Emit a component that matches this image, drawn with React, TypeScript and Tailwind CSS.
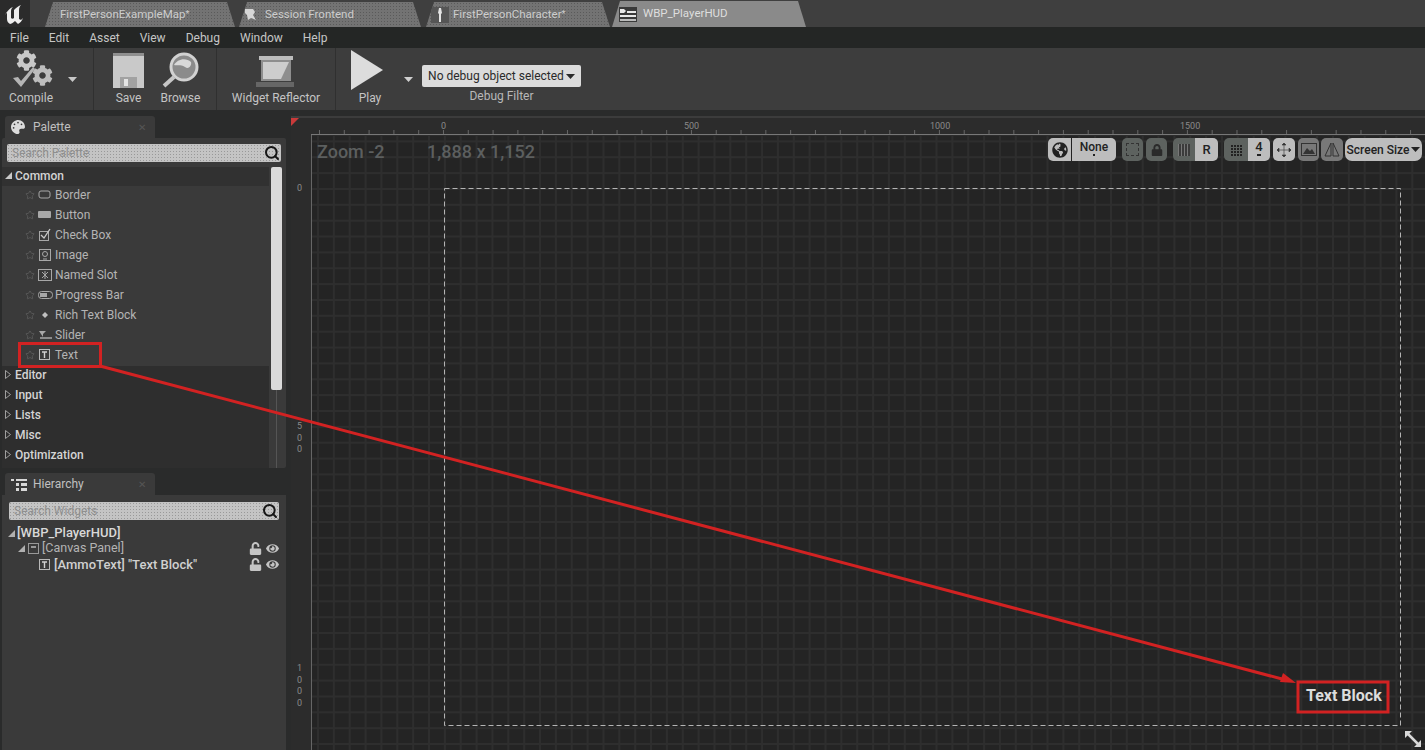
import { Search, Star } from "lucide-react";
import { FaCog, FaEye, FaGlobeAmericas, FaLock, FaPalette, FaUnlock } from "react-icons/fa";

const FONT = "font-['Roboto','Liberation_Sans',sans-serif]";

const menus = ["File", "Edit", "Asset", "View", "Debug", "Window", "Help"];

const Caret = ({ className = "" }: { className?: string }) => (
  <svg width="9" height="5" viewBox="0 0 9 5" className={className}>
    <path d="M0 0h9L4.5 5z" fill="currentColor" />
  </svg>
);

const Logo = () => (
  <svg width="22" height="20" viewBox="0 0 22 20">
    <path
      d="M1 11C3 7 6 4 9 3 7 5 7 6 7 8v6c1 1 2 1 3 0V6c2-2 4-4 7-5-2 2-2 4-2 6v8l2 1 2-2c-1 3-3 5-5 6l-3-3c-2 2-4 3-5 3-2-1-3-3-3-5V9c-1 0-1 1-2 2z"
      fill="#eeeeee"
    />
  </svg>
);

const TabIcon = ({ kind }: { kind: string }) => {
  if (kind === "session")
    return (
      <svg width="16" height="14" viewBox="0 0 16 14" className="mr-[5px]">
        <path d="M1 1h8l2 3-2 3 3 5-5-2-3 2-1-5-2-2z" fill="#d6d6d6" />
      </svg>
    );
  if (kind === "char")
    return (
      <svg width="18" height="18" viewBox="0 0 18 18" className="mr-[4px]">
        <rect x="0" y="1" width="18" height="16" fill="#555" />
        <path d="M8 2h2l1 5-1 1v8H8V8L7 7z" fill="#e4e4e4" />
      </svg>
    );
  return (
    <svg width="18" height="15" viewBox="0 0 18 15" className="mr-[6px]">
      <rect width="18" height="15" fill="#3a3a3a" />
      <path d="M1 2h4l2 2-2 2H1z" fill="#e8e8e8" />
      <rect x="1" y="8" width="16" height="2" fill="#e8e8e8" />
      <rect x="8" y="4" width="9" height="2" fill="#e8e8e8" />
      <rect x="1" y="12" width="16" height="2" fill="#bbb" />
    </svg>
  );
};

const tabs = [
  { label: "FirstPersonExampleMap", mark: "*", left: "ml-[15px]", w: "w-[190px]", pl: "pl-[15px]", kind: "" },
  { label: "Session Frontend", mark: "", left: "ml-[4px]", w: "w-[182px]", pl: "pl-[5px]", kind: "session" },
  { label: "FirstPersonCharacter", mark: "*", left: "ml-[5px]", w: "w-[184px]", pl: "pl-[5px]", kind: "char" },
];

const TopTabs = () => (
  <div className="h-[27px] flex items-end bg-[#3f3f3f] shrink-0">
    <div className="w-[30px] h-full bg-[#2b2b2b] flex items-center justify-center shrink-0">
      <Logo />
    </div>
    {tabs.map((t) => (
      <div
        key={t.label}
        className={`${t.left} ${t.w} ${t.pl} h-[25px] flex items-center bg-[#737373] bg-[radial-gradient(rgba(0,0,0,0.22)_1px,transparent_1px)] bg-[size:3px_3px] rounded-t-[6px] [clip-path:polygon(8px_0,calc(100%-8px)_0,100%_100%,0_100%)] text-[11.5px] text-[#cdcdcd]`}
      >
        {t.kind && <TabIcon kind={t.kind} />}
        <span>{t.label}</span>
        <span className="text-[9px]">{t.mark}</span>
      </div>
    ))}
    <div className="ml-[2px] w-[194px] pl-[7px] h-[26px] flex items-center bg-[#8a8a8a] rounded-t-[6px] [clip-path:polygon(8px_0,calc(100%-8px)_0,100%_100%,0_100%)] text-[11.5px] text-[#dedede]">
      <TabIcon kind="wbp" />
      <span>WBP_PlayerHUD</span>
    </div>
  </div>
);

const MenuBar = () => (
  <div className="h-[21px] bg-[#242625] flex items-center gap-5 pl-[10px] text-[12px] text-[#c6c6c6] shrink-0">
    {menus.map((m) => (
      <span key={m}>{m}</span>
    ))}
  </div>
);

const ToolLabel = ({ children }: { children: string }) => (
  <span className="absolute top-[43px] text-[12px] leading-[14px] text-[#c4c4c4] whitespace-nowrap">{children}</span>
);

const Sep = () => <div className="w-px h-full bg-[#303030] shrink-0" />;

const Toolbar = () => (
  <div className="h-[62px] bg-[#3d3d3d] flex text-[#c4c4c4] shrink-0">
    <div className="w-[93px] relative flex flex-col items-center pr-[31px] pt-[2px]">
      <div className="relative w-[42px] h-[40px]">
        <FaCog className="absolute left-[6px] top-[0px] text-[#c9c9c9]" size={21} />
        <FaCog className="absolute left-[22px] top-[15px] text-[#bdbdbd]" size={21} />
        <svg width="30" height="24" viewBox="0 0 30 24" className="absolute left-[1px] top-[14px]">
          <path d="M2 14l5-1 3 4L22 3l2 2L10 23z" fill="#b5b5b5" />
        </svg>
      </div>
      <ToolLabel>Compile</ToolLabel>
      <Caret className="absolute left-[68px] top-[29px] text-[#c8c8c8]" />
    </div>
    <Sep />
    <div className="w-[122px] flex justify-center gap-[16px] pt-[4px] pl-[3px]">
      <div className="relative flex flex-col items-center w-[32px]">
        <svg width="33" height="37" viewBox="0 0 33 37">
          <path d="M1 1h31v35H1z" fill="#c9c9c9" />
          <rect x="1" y="1" width="31" height="3" fill="#8f8f8f" />
          <rect x="8" y="25" width="17" height="11" fill="#a2a2a2" />
          <rect x="12" y="27" width="4" height="7" fill="#e4e4e4" />
        </svg>
        <span className="mt-[2px] text-[12px] leading-[14px] text-[#c4c4c4]">Save</span>
      </div>
      <div className="relative flex flex-col items-center w-[40px]">
        <svg width="40" height="37" viewBox="0 0 40 37">
          <circle cx="23" cy="15" r="13" fill="#8b8b8b" stroke="#d2d2d2" strokeWidth="3" />
          <path d="M13 13c3-6 12-8 17-3 1 3-2 8-6 5-5-3-8-1-11-2z" fill="#d8d8d8" />
          <path d="M13 25L3 34" stroke="#c6c6c6" strokeWidth="4" />
        </svg>
        <span className="mt-[2px] text-[12px] leading-[14px] text-[#c4c4c4]">Browse</span>
      </div>
    </div>
    <Sep />
    <div className="w-[118px] relative flex flex-col items-center pt-[6px]">
      <svg width="40" height="35" viewBox="0 0 40 35">
        <path d="M3 2h34v4H3z" fill="#bdbdbd" />
        <path d="M5 6h30v21H5z" fill="#8e8e8e" />
        <path d="M7 8h26l-8 17H7z" fill="#cdcdcd" />
        <path d="M0 28h38v5H0z" fill="#666" />
      </svg>
      <ToolLabel>Widget Reflector</ToolLabel>
    </div>
    <Sep />
    <div className="w-[86px] relative flex flex-col items-center pr-[18px] pt-[2px]">
      <svg width="34" height="40" viewBox="0 0 34 40" className="-ml-[6px]">
        <path d="M1 0l32 20L1 40z" fill="#dcdcdc" />
      </svg>
      <ToolLabel>Play</ToolLabel>
      <Caret className="absolute left-[68px] top-[29px] text-[#d0d0d0]" />
    </div>
    <div className="flex flex-col items-center pt-[17px]">
      <div className="w-[159px] h-[22px] rounded-[2px] bg-[#dcdcdc] text-[#2a2a2a] text-[12px] flex items-center justify-center gap-[2px]">
        <span>No debug object selected</span>
        <Caret />
      </div>
      <span className="mt-[2px] text-[12px] leading-[14px] text-[#b8b8b8]">Debug Filter</span>
    </div>
  </div>
);

const PanelTab = ({ icon, label }: { icon: React.ReactNode; label: string }) => (
  <div className="ml-[5px] w-[150px] h-[22px] bg-[#3a3a3a] rounded-t-[3px] flex items-center pl-[6px] shrink-0">
    <span className="w-[22px] flex">{icon}</span>
    <span className="text-[12px] text-[#c0c0c0]">{label}</span>
    <span className="ml-auto mr-[9px] text-[10px] text-[#555]">✕</span>
  </div>
);

const SearchBox = ({ placeholder, className }: { placeholder: string; className: string }) => (
  <div className={`${className} h-[18px] rounded-[2px] bg-[#c4c4c4] bg-[radial-gradient(rgba(0,0,0,0.22)_1px,transparent_1px)] bg-[size:3px_3px] flex items-center pl-[5px] pr-[1px] text-[12px] text-[#8f8f8f]`}>
    <span>{placeholder}</span>
    <Search size={16} strokeWidth={3} className="ml-auto text-[#161616]" />
  </div>
);

const widgetIcons: Record<string, React.ReactNode> = {
  Border: <rect x="1" y="3" width="11" height="7" rx="2" fill="none" stroke="#a8a8a8" />,
  Button: <rect x="0" y="3" width="13" height="7" rx="1" fill="#a8a8a8" />,
  "Check Box": (
    <>
      <rect x="1.5" y="3.5" width="9" height="9" fill="none" stroke="#a8a8a8" />
      <path d="M3 7l3 3 6-9" fill="none" stroke="#c8c8c8" strokeWidth="1.3" />
    </>
  ),
  Image: (
    <>
      <rect x="1.5" y="1.5" width="11" height="11" fill="none" stroke="#a8a8a8" />
      <circle cx="7" cy="6" r="2.5" fill="none" stroke="#a8a8a8" />
      <path d="M5 11h4" stroke="#a8a8a8" />
    </>
  ),
  "Named Slot": (
    <>
      <rect x="0.5" y="1.5" width="13" height="11" fill="none" stroke="#a8a8a8" />
      <path d="M4 4l6 6M10 4l-6 6M7 3v8" stroke="#a8a8a8" />
    </>
  ),
  "Progress Bar": (
    <>
      <rect x="0.5" y="3.5" width="14" height="7" rx="3" fill="none" stroke="#a8a8a8" />
      <rect x="2" y="5" width="7" height="4" fill="#a8a8a8" />
    </>
  ),
  "Rich Text Block": <path d="M7 4l3 3-3 3-3-3z" fill="#c0c0c0" />,
  Slider: (
    <>
      <path d="M1 3h7L5 6v3" fill="#a8a8a8" />
      <path d="M2 10h12" stroke="#a8a8a8" strokeWidth="1.5" />
    </>
  ),
  Text: (
    <>
      <rect x="1.5" y="1.5" width="10" height="10" fill="none" stroke="#b8b8b8" />
      <path d="M4 4h5M6.5 4v6" stroke="#d0d0d0" strokeWidth="1.4" />
    </>
  ),
};

const widgets = ["Border", "Button", "Check Box", "Image", "Named Slot", "Progress Bar", "Rich Text Block", "Slider", "Text"];
const collapsed = ["Editor", "Input", "Lists", "Misc", "Optimization"];

const WidgetIcon = ({ name, className = "" }: { name: string; className?: string }) => (
  <svg width="15" height="14" viewBox="0 0 15 14" className={className}>
    {widgetIcons[name]}
  </svg>
);

const Palette = () => (
  <div className="h-[330px] bg-[#3a3a3a] ml-[2px] w-[284px] rounded-[2px] pt-[6px] flex flex-col shrink-0">
    <SearchBox placeholder="Search Palette" className="mx-[5px] w-[274px]" />
    <div className="mt-[5px] flex flex-1 min-h-0">
      <div className="w-[267px] flex flex-col">
        <div className="h-[19px] pb-[2px] bg-[#313131] flex items-center pl-[3px] text-[12px] font-medium text-[#d4d4d4] shrink-0">
          <svg width="7" height="7" viewBox="0 0 7 7" className="mr-[1px]">
            <path d="M7 0v7H0z" fill="#c8c8c8" />
          </svg>
          <span className="ml-[2px]">Common</span>
        </div>
        {widgets.map((w) => (
          <div key={w} className="h-[20px] -translate-y-[1px] flex items-center pl-[23px] text-[12px] text-[#b4b4b4] shrink-0">
            <Star size={10} strokeWidth={1.5} className="text-[#666] mr-[3px]" />
            <WidgetIcon name={w} className="mr-[2px]" />
            <span>{w}</span>
          </div>
        ))}
        <div className="flex-1 bg-[#2e2e2e] flex flex-col">
          {collapsed.map((c) => (
            <div key={c} className="h-[20px] pb-[3px] flex items-center pl-[3px] text-[12px] font-medium text-[#d4d4d4] shrink-0">
              <svg width="6" height="9" viewBox="0 0 6 9" className="mr-[4px]">
                <path d="M.5.5l5 4-5 4z" fill="none" stroke="#a0a0a0" />
              </svg>
              <span>{c}</span>
            </div>
          ))}
        </div>
      </div>
      <div className="ml-[2px] w-[11px] flex flex-col">
        <div className="h-[223px] bg-[#dadada] rounded-[2px] shrink-0" />
        <div className="flex-1 w-px mx-auto bg-[#555]" />
      </div>
    </div>
  </div>
);

const HierRow = ({ pl, children, lock, className = "" }: { pl: string; children: React.ReactNode; lock?: boolean; className?: string }) => (
  <div className={`${pl} ${className} flex items-center`}>
    {children}
    {lock && (
      <span className="ml-auto mr-[7px] flex items-center gap-[4px] text-[#c4c4c4]">
        <FaUnlock size={13} />
        <FaEye size={13} />
      </span>
    )}
  </div>
);

const Hierarchy = () => (
  <div className="flex-1 bg-[#3a3a3a] ml-[2px] w-[284px] pt-[7px] flex flex-col">
    <SearchBox placeholder="Search Widgets" className="mx-[7px] w-[270px]" />
    <HierRow pl="pl-[6px]" className="mt-[5px] h-[16px] text-[13px] font-medium text-[#d8d8d8]">
      <svg width="7" height="7" viewBox="0 0 7 7" className="mr-[2px]">
        <path d="M7 0v7H0z" fill="#b0b0b0" />
      </svg>
      <span>[WBP_PlayerHUD]</span>
    </HierRow>
    <HierRow pl="pl-[16px]" lock className="h-[15px] text-[12.5px] text-[#b4b4b4]">
      <svg width="7" height="7" viewBox="0 0 7 7" className="mr-[3px]">
        <path d="M7 0v7H0z" fill="#b0b0b0" />
      </svg>
      <svg width="11" height="11" viewBox="0 0 11 11" className="mr-[3px]">
        <rect x=".5" y=".5" width="10" height="10" fill="none" stroke="#999" />
        <rect x="3" y="3" width="5" height="2" fill="#999" />
      </svg>
      <span>[Canvas Panel]</span>
    </HierRow>
    <HierRow pl="pl-[36px]" lock className="h-[17px] text-[13px] font-medium text-[#d0d0d0]">
      <WidgetIcon name="Text" className="mr-[1px]" />
      <span>[AmmoText] "Text Block"</span>
    </HierRow>
  </div>
);

const LeftColumn = () => (
  <div className="w-[288px] flex flex-col shrink-0">
    <PanelTab
      icon={<FaPalette size={14} className="text-[#dcdcdc]" />}
      label="Palette"
    />
    <Palette />
    <div className="h-[5px] shrink-0" />
    <PanelTab
      icon={
        <svg width="16" height="13" viewBox="0 0 16 13">
          <path d="M0 1h3v2H0zM5 1h11v2H5zM5 5h3v3H5zM10 5h6v3h-6zM5 10h3v3H5zM10 10h6v3h-6z" fill="#d8d8d8" />
        </svg>
      }
      label="Hierarchy"
    />
    <Hierarchy />
  </div>
);

const IconBtn = ({ children, dark, className = "" }: { children: React.ReactNode; dark?: boolean; className?: string }) => (
  <div className={`${dark ? "bg-[#5d625f] text-[#2a2a2a]" : "bg-[#bdbdbd] text-[#222]"} ${className} h-[23px] flex items-center justify-center shrink-0`}>
    {children}
  </div>
);

const CanvasTools = () => (
  <div className="absolute right-[3px] top-[20px] flex items-center text-[12px] font-medium">
    <IconBtn className="w-[24px] rounded-l-[5px] border-r border-[#222]">
      <FaGlobeAmericas size={16} />
    </IconBtn>
    <IconBtn className="w-[44px] rounded-r-[5px] flex-col">
      <span className="leading-[14px] -mt-[3px]">None</span>
      <span className="w-[2px] h-[2px] bg-[#222]" />
    </IconBtn>
    <IconBtn dark className="ml-[6px] w-[21px] rounded-[5px]">
      <span className="w-[13px] h-[13px] border border-dashed border-[#333]" />
    </IconBtn>
    <IconBtn dark className="ml-[3px] w-[21px] rounded-[5px]">
      <FaLock size={12} />
    </IconBtn>
    <IconBtn dark className="ml-[6px] w-[22px] rounded-l-[5px]">
      <span className="w-[12px] h-[12px] bg-[#3b3b3b] bg-[linear-gradient(90deg,#777_1px,transparent_1px)] bg-[size:3px_3px]" />
    </IconBtn>
    <IconBtn className="w-[23px] rounded-r-[5px] text-[13px]">
      <span>R</span>
    </IconBtn>
    <IconBtn dark className="ml-[6px] w-[24px] rounded-l-[5px]">
      <span className="w-[12px] h-[12px] bg-[#222] bg-[linear-gradient(90deg,#5d625f_1px,transparent_1px),linear-gradient(#5d625f_1px,transparent_1px)] bg-[size:3px_3px]" />
    </IconBtn>
    <IconBtn className="w-[22px] rounded-r-[5px] text-[13px] flex-col">
      <span className="leading-[14px] -mt-[3px]">4</span>
      <span className="w-[4px] h-[2px] bg-[#222]" />
    </IconBtn>
    <IconBtn className="ml-[3px] w-[22px] rounded-[5px]">
      <svg width="16" height="16" viewBox="0 0 16 16">
        <path d="M8 1v14M1 8h14M8 1L6 3h4zM8 15l-2-2h4zM1 8l2-2v4zM15 8l-2-2v4z" fill="#333" stroke="#333" strokeWidth=".6" />
      </svg>
    </IconBtn>
    <IconBtn dark className="ml-[3px] w-[21px] rounded-[5px] bg-[#787878]">
      <svg width="16" height="13" viewBox="0 0 16 13">
        <rect x=".5" y=".5" width="15" height="12" fill="none" stroke="#333" />
        <path d="M2 11l4-6 3 3 2-2 3 5z" fill="#333" />
      </svg>
    </IconBtn>
    <IconBtn dark className="ml-[2px] w-[22px] rounded-[5px] bg-[#787878]">
      <svg width="16" height="15" viewBox="0 0 16 15">
        <path d="M7 1L1 14h6zM9 1l6 13H9z" fill="none" stroke="#333" />
      </svg>
    </IconBtn>
    <IconBtn className="ml-[2px] w-[77px] rounded-[7px] gap-[2px]">
      <span>Screen Size</span>
      <Caret />
    </IconBtn>
  </div>
);

const hLabels = [
  { t: "0", c: "left-[150px]" },
  { t: "500", c: "left-[393px]" },
  { t: "1000", c: "left-[639px]" },
  { t: "1500", c: "left-[889px]" },
];

const vLabels = [
  { t: ["0"], c: "top-[65px]" },
  { t: ["5", "0", "0"], c: "top-[303px]" },
  { t: ["1", "0", "0", "0"], c: "top-[545px]" },
];

const DesignCanvas = () => (
  <div className="relative flex-1 ml-[3px] bg-[#2c2c2c] border-t-2 border-[#3c3c3c] overflow-hidden">
    {/* rulers */}
    <div className="h-[17px] ml-[20px] border-b border-[#777] bg-[linear-gradient(90deg,#666_1px,transparent_1px)] bg-[size:24.8px_4px] bg-[position:8px_bottom] bg-repeat-x" />
    <div className="absolute left-[20px] top-[17px] bottom-0 w-px bg-[#666]" />
    <div className="absolute left-[21px] top-[18px] right-0 bottom-0 bg-[#242424] bg-[linear-gradient(90deg,#2e2e2e_2px,transparent_2px),linear-gradient(#2e2e2e_2px,transparent_2px)] bg-[size:15.87px_15.87px] bg-[position:5px_4.4px]" />
    <svg width="10" height="10" viewBox="0 0 10 10" className="absolute left-0 top-[-1px]">
      <path d="M0 0h9L0 9z" fill="#c93a3a" />
    </svg>
    {hLabels.map((l) => (
      <span key={l.t} className={`${l.c} absolute top-[2px] text-[9px] leading-[12px] text-[#8a8a8a]`}>{l.t}</span>
    ))}
    {vLabels.map((l) => (
      <div key={l.c} className={`${l.c} absolute left-[6px] flex flex-col text-[9px] leading-[11.7px] text-[#8a8a8a]`}>
        {l.t.map((d, i) => (
          <span key={i}>{d}</span>
        ))}
      </div>
    ))}
    <span className="absolute left-[26px] top-[22px] text-[18px] leading-[24px] font-medium text-[#5c5f5f]">Zoom -2</span>
    <span className="absolute left-[136px] top-[22px] text-[18px] leading-[24px] font-medium text-[#5c5f5f]">1,888 x 1,152</span>
    <CanvasTools />
    <svg width="958" height="539" viewBox="0 0 958 539" className="absolute left-[153px] top-[70px]">
      <rect x=".5" y=".5" width="956" height="537" fill="none" stroke="#b4b4b4" strokeDasharray="5 3" />
    </svg>
    <span className="absolute left-[1015px] top-[566px] text-[16px] leading-[24px] font-bold text-[#dcdcdc]">Text Block</span>
    <svg width="18" height="18" viewBox="0 0 18 18" className="absolute left-[1113px] top-[612px]">
      <path d="M3 3l12 12" stroke="#d8d8d8" strokeWidth="2.5" />
      <path d="M1 1h7L1 8zM17 17h-7l7-7z" fill="#d8d8d8" />
    </svg>
  </div>
);

const Annotations = () => (
  <svg width="1425" height="750" viewBox="0 0 1425 750" className="absolute inset-0 pointer-events-none">
    <rect x="19.5" y="343.5" width="81" height="23" fill="none" stroke="#d22222" strokeWidth="3" />
    <rect x="1298" y="682" width="90" height="30" fill="none" stroke="#d22222" strokeWidth="3" />
    <path d="M100 366L1282 679" stroke="#d22222" strokeWidth="3" />
    <path d="M1296 683l-16-1 3-9z" fill="#d22222" />
  </svg>
);

export default function App() {
  return (
    <div className={`${FONT} relative w-[1425px] h-[750px] overflow-hidden bg-[#2a2b2b] flex flex-col`}>
      <TopTabs />
      <MenuBar />
      <Toolbar />
      <div className="flex flex-1 min-h-0 pt-[6px]">
        <LeftColumn />
        <DesignCanvas />
      </div>
      <Annotations />
    </div>
  );
}
